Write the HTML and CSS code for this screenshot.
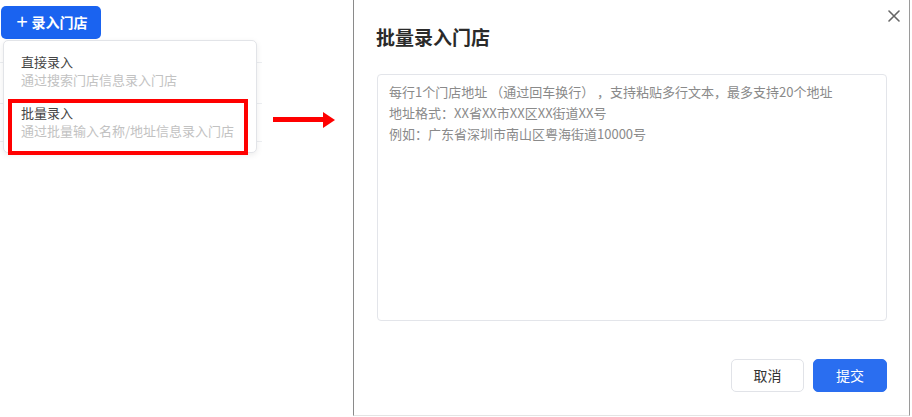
FILE: index.html
```html
<!DOCTYPE html>
<html lang="zh-CN">
<head>
<meta charset="utf-8">
<title>批量录入门店</title>
<link rel="stylesheet" href="styles.css">
</head>
<body>
<div class="page">
  <section class="left">
    <button class="add-btn" type="button"><span class="plus">+</span>录入门店</button>
    <div class="bg-rows">
      <div class="bg-row r1"></div>
      <div class="bg-row r2"></div>
      <div class="bg-row r3"></div>
    </div>
    <div class="dropdown">
      <div class="dd-item first">
        <div class="dd-title">直接录入</div>
        <div class="dd-sub">通过搜索门店信息录入门店</div>
      </div>
      <div class="dd-item">
        <div class="dd-title">批量录入</div>
        <div class="dd-sub">通过批量输入名称/地址信息录入门店</div>
      </div>
    </div>
    <div class="highlight"></div>
    <div class="arrow"><span class="arrow-line"></span><span class="arrow-head"></span></div>
  </section>
  <section class="modal">
    <button class="close" type="button" aria-label="关闭">
      <svg width="12" height="12" viewBox="0 0 12 12"><path d="M1 1L11 11M11 1L1 11" stroke="#666" stroke-width="1.6" stroke-linecap="round"/></svg>
    </button>
    <h2 class="modal-title">批量录入门店</h2>
    <div class="textarea">
      <div>每行1个门店地址 （通过回车换行） ，支持粘贴多行文本，最多支持20个地址</div>
      <div>地址格式：XX省XX市XX区XX街道XX号</div>
      <div>例如：广东省深圳市南山区粤海街道10000号</div>
    </div>
    <div class="footer">
      <button class="btn cancel" type="button">取消</button>
      <button class="btn submit" type="button">提交</button>
    </div>
  </section>
</div>
</body>
</html>
```
FILE: styles.css
```css
* { box-sizing: border-box; }
html, body { margin: 0; padding: 0; background: #fff; }
body {
  font-family: "Noto Sans CJK SC", "Noto Sans", "Liberation Sans", sans-serif;
  width: 912px;
  height: 417px;
  overflow: hidden;
}
.page {
  display: flex;
  height: 417px;
}
.left {
  position: relative;
  width: 353px;
  flex: none;
  padding: 6px 0 0 1px;
}
.add-btn {
  display: flex;
  align-items: center;
  justify-content: center;
  gap: 4px;
  width: 100px;
  height: 33px;
  border: none;
  border-radius: 5px;
  background: #1a63f0;
  color: #fff;
  font-family: inherit;
  font-size: 14px;
  font-weight: 700;
  padding: 0 0 2px 2px;
  margin: 0;
}
.plus {
  font-size: 20px;
  font-weight: 400;
  line-height: 1;
  margin-top: -1px;
}
.bg-rows {
  width: 262px;
  margin-top: 23px;
  margin-left: -1px;
}
.bg-row { border-top: 1px solid #eceef1; }
.r1 { height: 41px; }
.r2 { height: 38px; }
.r3 { height: 1px; }
.dropdown {
  position: absolute;
  left: 3px;
  top: 40px;
  width: 254px;
  height: 113px;
  background: #fff;
  border: 1px solid #e2e4e8;
  border-radius: 5px;
  box-shadow: 0 2px 6px rgba(0, 0, 0, 0.08);
  padding: 0 0 9px;
}
.dd-item {
  padding: 12px 17px 3px;
}
.dd-title {
  font-size: 13px;
  line-height: 18px;
  color: #444;
}
.dd-sub {
  font-size: 13px;
  line-height: 18px;
  color: #c2c2c2;
}
.highlight {
  position: absolute;
  left: 8px;
  top: 99px;
  width: 240px;
  height: 56px;
  border: 4px solid #ff0000;
}
.arrow {
  position: absolute;
  left: 273px;
  top: 111px;
  display: flex;
  align-items: center;
  height: 17px;
}
.arrow-line {
  display: block;
  width: 50px;
  height: 5px;
  background: #ff0000;
}
.arrow-head {
  display: block;
  width: 0;
  height: 0;
  border-top: 8.5px solid transparent;
  border-bottom: 8.5px solid transparent;
  border-left: 12px solid #ff0000;
}
.modal {
  position: relative;
  width: 557px;
  height: 416px;
  flex: none;
  border-left: 1px solid #8a8a8a;
  border-right: 1px solid #9a9a9a;
  border-bottom: 1px solid #e4e4e4;
  padding: 25px 22px 0 22px;
  display: flex;
  flex-direction: column;
}
.close {
  position: absolute;
  right: 9px;
  top: 10px;
  width: 12px;
  height: 12px;
  padding: 0;
  border: none;
  background: none;
  display: flex;
}
.modal-title {
  margin: 0;
  font-size: 19px;
  line-height: 24px;
  font-weight: 700;
  color: #2a2a2a;
}
.textarea {
  margin-top: 25px;
  margin-left: 1px;
  width: 510px;
  height: 247px;
  border: 1px solid #e3e5ea;
  border-radius: 4px;
  padding: 6px 11px;
  font-size: 13px;
  line-height: 21px;
  color: #8a8a8a;
}
.footer {
  display: flex;
  justify-content: flex-end;
  gap: 9px;
  margin-top: 38px;
  width: 511px;
}
.btn {
  height: 33px;
  border-radius: 5px;
  font-family: inherit;
  font-size: 14px;
  padding: 0 0 1px;
  margin: 0;
}
.cancel {
  width: 73px;
  background: #fff;
  border: 1px solid #e1e3e8;
  color: #333;
}
.submit {
  width: 74px;
  background: #2a6ef0;
  border: 1px solid #2a6ef0;
  color: #fff;
}
```
